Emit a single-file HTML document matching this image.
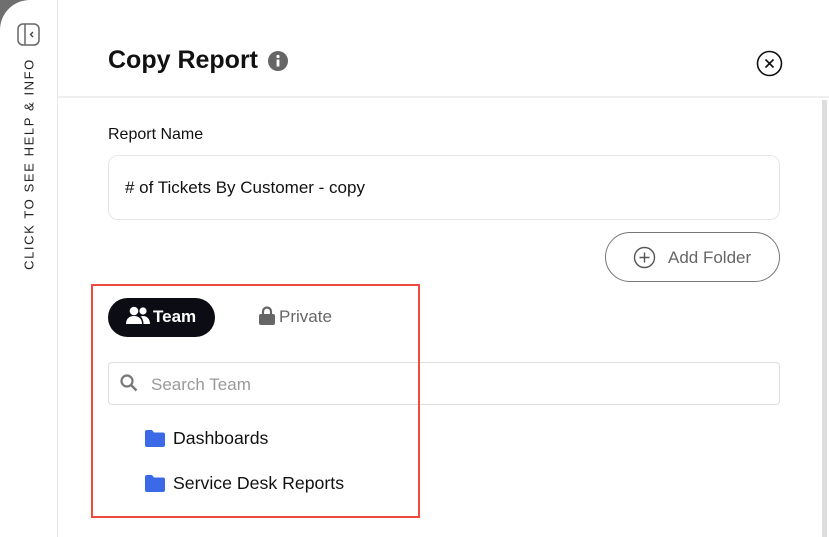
<!DOCTYPE html>
<html><head><meta charset="utf-8"><style>
*{margin:0;padding:0;box-sizing:border-box}
body{width:829px;height:537px;overflow:hidden;background:#fff;font-family:"Liberation Sans",sans-serif;color:#111;position:relative}
.corner{position:absolute;left:0;top:0;width:30px;height:30px;background:#6f6f6f}
.side{position:absolute;left:0;top:0;width:58px;height:537px;border-right:1px solid #e8e8e8;background:#fff;overflow:hidden;border-top-left-radius:30px}
.vt{position:absolute;left:29px;top:164px;transform:translate(-50%,-50%) rotate(-90deg);white-space:nowrap;font-size:13px;letter-spacing:1.6px;color:#222}
.hdr{position:absolute;left:58px;top:0;right:0;height:98px;border-bottom:2px solid #efefef}
h1{position:absolute;left:108px;top:46px;font-size:25px;font-weight:bold;color:#111}
.lbl{position:absolute;left:108px;top:126px;font-size:16px;color:#111}
.inp{position:absolute;left:108px;top:155px;width:672px;height:65px;border:1px solid #e6e6e6;border-radius:10px;font-size:17px;padding:22px 0 0 16px}
.add{position:absolute;left:605px;top:232px;width:175px;height:50px;border:1px solid #777;border-radius:25px;font-size:17px;color:#666;padding:15px 0 0 62px}
.red{position:absolute;left:91px;top:284px;width:329px;height:234px;border:2px solid #ee4a40;z-index:5}
.team{position:absolute;left:108px;top:298px;width:107px;height:39px;border-radius:20px;background:#0c0d14;color:#fff;font-size:17px;font-weight:bold;padding:9px 0 0 45px}
.priv{position:absolute;left:279px;top:307px;font-size:17px;color:#666}
.search{position:absolute;left:108px;top:362px;width:672px;height:43px;border:1px solid #ddd;border-radius:4px;font-size:17px;color:#999;padding:12px 0 0 42px}
.it{position:absolute;left:173px;font-size:17.7px;color:#111}
.scroll{position:absolute;left:822px;top:100px;width:5px;height:437px;background:#ddd}
</style></head><body>
<div class="corner"></div>
<div class="side">
<svg style="position:absolute;left:17px;top:23px" width="23" height="23" viewBox="0 0 23 23"><rect x="1" y="1" width="21" height="21" rx="5" fill="none" stroke="#666" stroke-width="1.5"/><line x1="8" y1="1" x2="8" y2="22" stroke="#666" stroke-width="1.5"/><path d="M16 9l-2.5 2.5L16 14" fill="none" stroke="#444" stroke-width="1.4"/></svg>
<div class="vt">CLICK TO SEE HELP &amp; INFO</div></div>
<div class="hdr"></div>
<h1>Copy Report</h1>
<svg style="position:absolute;left:268px;top:51px" width="20" height="20" viewBox="0 0 20 20"><circle cx="10" cy="10" r="10" fill="#666"/><circle cx="10" cy="5.5" r="1.6" fill="#fff"/><rect x="8.6" y="8.5" width="2.8" height="7" fill="#fff"/></svg>
<svg style="position:absolute;left:756px;top:50px" width="27" height="27" viewBox="0 0 27 27"><circle cx="13.5" cy="13.5" r="12" fill="none" stroke="#111" stroke-width="1.6"/><path d="M9.5 9.5l8 8M17.5 9.5l-8 8" stroke="#111" stroke-width="1.6"/></svg>
<div class="lbl">Report Name</div>
<div class="inp"># of Tickets By Customer - copy</div>
<div class="add">Add Folder</div>
<svg style="position:absolute;left:633px;top:246px" width="23" height="23" viewBox="0 0 23 23"><circle cx="11.5" cy="11.5" r="10" fill="none" stroke="#555" stroke-width="1.4"/><path d="M11.5 6.5v10M6.5 11.5h10" stroke="#555" stroke-width="1.4"/></svg>
<div class="red"></div>
<div class="team">Team</div>
<svg style="position:absolute;left:126px;top:306px" width="24" height="20" viewBox="0 0 24 20"><circle cx="8" cy="5" r="4.3" fill="#fff"/><path d="M0 18c0-5 3-8 8-8s8 3 8 8z" fill="#fff"/><circle cx="17" cy="5" r="3.6" fill="#fff"/><path d="M17 10c4 0 7 3 7 8h-6.5c0-3-1-6-3-7.5z" fill="#fff"/></svg>
<svg style="position:absolute;left:259px;top:306px" width="16" height="19" viewBox="0 0 16 19"><path d="M4 8V5.5a4 4 0 018 0V8" fill="none" stroke="#666" stroke-width="2.2"/><rect x="0" y="8" width="16" height="11" rx="2" fill="#666"/></svg>
<div class="priv">Private</div>
<div class="search">Search Team</div>
<svg style="position:absolute;left:120px;top:374px" width="18" height="18" viewBox="0 0 18 18"><circle cx="7" cy="7" r="5.5" fill="none" stroke="#777" stroke-width="2.2"/><path d="M11 11l5.5 5.5" stroke="#777" stroke-width="2.4"/></svg>
<svg style="position:absolute;left:145px;top:430px" width="20" height="17" viewBox="0 0 20 17"><path d="M0 2a2 2 0 012-2h5l2 2.5h9a2 2 0 012 2V15a2 2 0 01-2 2H2a2 2 0 01-2-2z" fill="#3b6ae8"/></svg>
<div class="it" style="top:428px">Dashboards</div>
<svg style="position:absolute;left:145px;top:475px" width="20" height="17" viewBox="0 0 20 17"><path d="M0 2a2 2 0 012-2h5l2 2.5h9a2 2 0 012 2V15a2 2 0 01-2 2H2a2 2 0 01-2-2z" fill="#3b6ae8"/></svg>
<div class="it" style="top:473px">Service Desk Reports</div>
<div class="scroll"></div>
</body></html>
